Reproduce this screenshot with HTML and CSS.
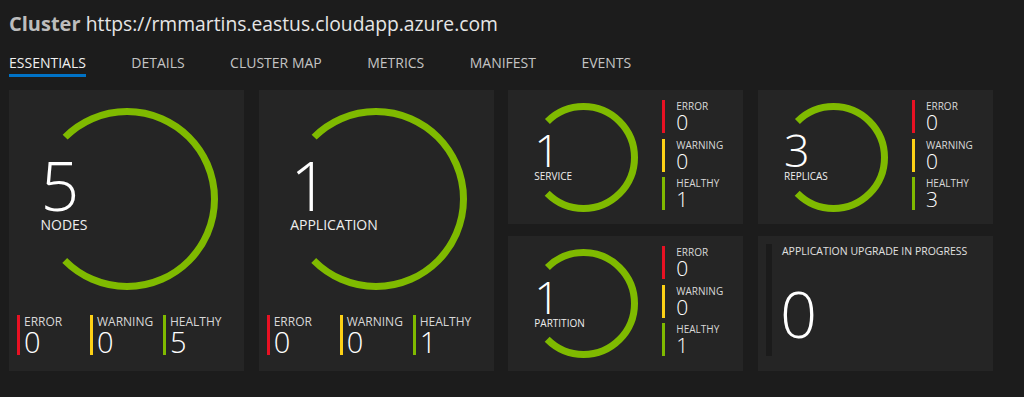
FILE: index.html
```html
<!DOCTYPE html>
<html lang="en">
<head>
    <meta charset="UTF-8">
    <title>Cluster Essentials</title>
    <link rel="stylesheet" href="styles.css">
</head>
<body>
    <div class="page">
        <h1 class="title"><span class="title-kind">Cluster</span> <span class="title-name">https://rmmartins.eastus.cloudapp.azure.com</span></h1>

        <nav class="tabs">
            <a class="tab active">ESSENTIALS</a>
            <a class="tab">DETAILS</a>
            <a class="tab">CLUSTER MAP</a>
            <a class="tab">METRICS</a>
            <a class="tab">MANIFEST</a>
            <a class="tab">EVENTS</a>
        </nav>

        <div class="tiles">
            <!-- nodes -->
            <div class="tile tile-large">
                <div class="gauge gauge-large">
                    <svg class="ring" viewBox="0 0 182 182">
                        <circle cx="91" cy="91" r="87.5" stroke-dasharray="412.3 600" transform="rotate(-135 91 91)"></circle>
                    </svg>
                    <div class="gauge-text">
                        <div class="gauge-value">5</div>
                        <div class="gauge-label">NODES</div>
                    </div>
                </div>
                <div class="stats-row">
                    <div class="stat error"><div class="stat-label">ERROR</div><div class="stat-value">0</div></div>
                    <div class="stat warning"><div class="stat-label">WARNING</div><div class="stat-value">0</div></div>
                    <div class="stat healthy"><div class="stat-label">HEALTHY</div><div class="stat-value">5</div></div>
                </div>
            </div>

            <!-- applications -->
            <div class="tile tile-large">
                <div class="gauge gauge-large">
                    <svg class="ring" viewBox="0 0 182 182">
                        <circle cx="91" cy="91" r="87.5" stroke-dasharray="412.3 600" transform="rotate(-135 91 91)"></circle>
                    </svg>
                    <div class="gauge-text">
                        <div class="gauge-value">1</div>
                        <div class="gauge-label">APPLICATION</div>
                    </div>
                </div>
                <div class="stats-row">
                    <div class="stat error"><div class="stat-label">ERROR</div><div class="stat-value">0</div></div>
                    <div class="stat warning"><div class="stat-label">WARNING</div><div class="stat-value">0</div></div>
                    <div class="stat healthy"><div class="stat-label">HEALTHY</div><div class="stat-value">1</div></div>
                </div>
            </div>

            <!-- services -->
            <div class="tile tile-small">
                <div class="gauge gauge-small">
                    <svg class="ring" viewBox="0 0 109 109">
                        <circle cx="54.5" cy="54.5" r="51" stroke-dasharray="240.3 400" transform="rotate(-135 54.5 54.5)"></circle>
                    </svg>
                    <div class="gauge-text">
                        <div class="gauge-value">1</div>
                        <div class="gauge-label">SERVICE</div>
                    </div>
                </div>
                <div class="stats-col">
                    <div class="stat error"><div class="stat-label">ERROR</div><div class="stat-value">0</div></div>
                    <div class="stat warning"><div class="stat-label">WARNING</div><div class="stat-value">0</div></div>
                    <div class="stat healthy"><div class="stat-label">HEALTHY</div><div class="stat-value">1</div></div>
                </div>
            </div>

            <!-- replicas -->
            <div class="tile tile-small">
                <div class="gauge gauge-small">
                    <svg class="ring" viewBox="0 0 109 109">
                        <circle cx="54.5" cy="54.5" r="51" stroke-dasharray="240.3 400" transform="rotate(-135 54.5 54.5)"></circle>
                    </svg>
                    <div class="gauge-text">
                        <div class="gauge-value">3</div>
                        <div class="gauge-label">REPLICAS</div>
                    </div>
                </div>
                <div class="stats-col">
                    <div class="stat error"><div class="stat-label">ERROR</div><div class="stat-value">0</div></div>
                    <div class="stat warning"><div class="stat-label">WARNING</div><div class="stat-value">0</div></div>
                    <div class="stat healthy"><div class="stat-label">HEALTHY</div><div class="stat-value">3</div></div>
                </div>
            </div>

            <!-- partitions -->
            <div class="tile tile-small">
                <div class="gauge gauge-small">
                    <svg class="ring" viewBox="0 0 109 109">
                        <circle cx="54.5" cy="54.5" r="51" stroke-dasharray="240.3 400" transform="rotate(-135 54.5 54.5)"></circle>
                    </svg>
                    <div class="gauge-text">
                        <div class="gauge-value">1</div>
                        <div class="gauge-label">PARTITION</div>
                    </div>
                </div>
                <div class="stats-col">
                    <div class="stat error"><div class="stat-label">ERROR</div><div class="stat-value">0</div></div>
                    <div class="stat warning"><div class="stat-label">WARNING</div><div class="stat-value">0</div></div>
                    <div class="stat healthy"><div class="stat-label">HEALTHY</div><div class="stat-value">1</div></div>
                </div>
            </div>

            <!-- upgrades -->
            <div class="tile tile-small upgrade">
                <div class="upgrade-bar"></div>
                <div class="upgrade-body">
                    <div class="upgrade-title">APPLICATION UPGRADE IN PROGRESS</div>
                    <div class="upgrade-value">0</div>
                </div>
            </div>
        </div>
    </div>
</body>
</html>
```

FILE: styles.css
```css
body {
    margin: 0;
    padding: 0;
    background-color: #1c1c1c;
    color: #e6e6e6;
    font-family: "Open Sans", "Noto Sans", sans-serif;
}

.page {
    padding: 0 9px;
}

.title {
    margin: 0;
    padding-top: 10px;
    font-size: 20px;
    font-weight: normal;
    line-height: 28px;
    color: #e6e6e6;
}

.title-kind {
    font-weight: bold;
    color: #bdbdbd;
}

.title-name {
    font-size: 19.3px;
}

/* tabs */
.tabs {
    display: flex;
    gap: 45.4px;
    margin-top: 15px;
    height: 37px;
}

.tab {
    font-size: 14px;
    line-height: 20px;
    height: 21px;
    color: #c4c4c4;
}

.tab.active {
    color: #f0f0f0;
    border-bottom: 3px solid #0072c6;
}

/* tiles */
.tiles {
    display: grid;
    grid-template-columns: repeat(4, 235px);
    grid-template-rows: 134px 135px;
    column-gap: 14.67px;
    row-gap: 12px;
}

.tile {
    background-color: #252525;
    box-sizing: border-box;
}

.tile-large {
    grid-row: span 2;
    display: flex;
    flex-direction: column;
    align-items: center;
    padding-top: 18px;
}

.tile-small {
    display: flex;
    align-items: center;
    padding-left: 21px;
}

/* gauges */
.gauge {
    position: relative;
    display: flex;
    align-items: center;
    box-sizing: border-box;
    flex-shrink: 0;
}

.gauge-large {
    width: 182px;
    height: 182px;
    padding-left: 5px;
}

.gauge-small {
    width: 109px;
    height: 109px;
    padding-left: 5px;
}

.ring {
    position: absolute;
    top: 0;
    left: 0;
    width: 100%;
    height: 100%;
}

.ring circle {
    fill: none;
    stroke: #7fba00;
    stroke-width: 7;
}

.gauge-text {
    position: relative;
}

.gauge-value {
    font-weight: 300;
    color: #fff;
}

.gauge-large .gauge-text {
    padding-bottom: 10px;
}

.gauge-large .gauge-value {
    font-size: 68px;
    line-height: 60px;
    margin-bottom: 2px;
}

.gauge-large .gauge-label {
    font-size: 14px;
    line-height: 16px;
    color: #eee;
}

.gauge-small .gauge-value {
    font-size: 45px;
    line-height: 38px;
}

.gauge-small .gauge-label {
    font-size: 10px;
    line-height: 14px;
    color: #eee;
}

/* stats */
.stat {
    border-left: 3px solid #e81123;
    padding-left: 4px;
    box-sizing: border-box;
}

.stat.warning {
    border-left-color: #fcd116;
}

.stat.healthy {
    border-left-color: #7fba00;
}

.stat-label {
    color: #d8d8d8;
}

.stat-value {
    font-weight: 300;
    color: #fff;
}

.stats-row {
    display: flex;
    align-self: stretch;
    margin-top: 25px;
    padding-left: 8px;
}

.stats-row .stat {
    width: 73px;
    height: 40px;
}

.stats-row .stat-label {
    font-size: 12px;
    line-height: 14px;
}

.stats-row .stat-value {
    font-size: 29px;
    line-height: 26px;
}

.stats-col {
    display: flex;
    flex-direction: column;
    gap: 5.5px;
    align-self: flex-start;
    margin: 10px 0 0 24px;
}

.stats-col .stat {
    height: 33px;
    padding-left: 11px;
}

.stats-col .stat-label {
    font-size: 10px;
    line-height: 12px;
}

.stats-col .stat-value {
    font-size: 21px;
    line-height: 20px;
}

/* upgrade tile */
.upgrade {
    align-items: stretch;
    padding: 8px 0 15px 8px;
}

.upgrade-bar {
    width: 6px;
    background-color: #1b1b1b;
}

.upgrade-body {
    padding-left: 10px;
}

.upgrade-title {
    font-size: 10.5px;
    line-height: 14px;
    color: #e0e0e0;
}

.upgrade-value {
    font-size: 65px;
    font-weight: 300;
    line-height: 60px;
    margin: 25px 0 0 -2px;
    color: #fff;
}
```
